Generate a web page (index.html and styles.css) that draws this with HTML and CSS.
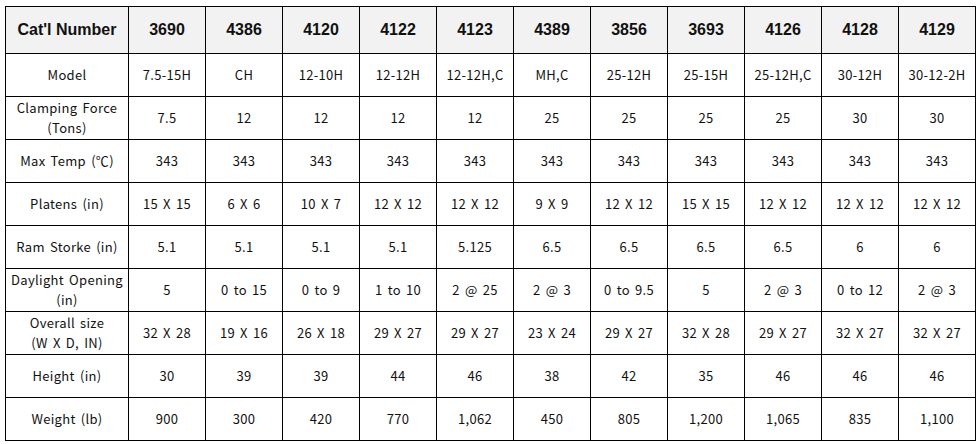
FILE: index.html
```html
<!DOCTYPE html>
<html>
<head>
<meta charset="utf-8">
<link rel="stylesheet" href="styles.css">
</head>
<body>
<table class="spec">
<colgroup>
<col class="c-label">
<col span="11" class="c-val">
</colgroup>
<thead>
<tr><th>Cat'l Number</th><th>3690</th><th>4386</th><th>4120</th><th>4122</th><th>4123</th><th>4389</th><th>3856</th><th>3693</th><th>4126</th><th>4128</th><th>4129</th></tr>
</thead>
<tbody>
<tr><td>Model</td><td>7.5-15H</td><td>CH</td><td>12-10H</td><td>12-12H</td><td>12-12H,C</td><td>MH,C</td><td>25-12H</td><td>25-15H</td><td>25-12H,C</td><td>30-12H</td><td>30-12-2H</td></tr>
<tr><td>Clamping Force<br>(Tons)</td><td>7.5</td><td>12</td><td>12</td><td>12</td><td>12</td><td>25</td><td>25</td><td>25</td><td>25</td><td>30</td><td>30</td></tr>
<tr><td>Max Temp (℃)</td><td>343</td><td>343</td><td>343</td><td>343</td><td>343</td><td>343</td><td>343</td><td>343</td><td>343</td><td>343</td><td>343</td></tr>
<tr><td>Platens (in)</td><td>15 X 15</td><td>6 X 6</td><td>10 X 7</td><td>12 X 12</td><td>12 X 12</td><td>9 X 9</td><td>12 X 12</td><td>15 X 15</td><td>12 X 12</td><td>12 X 12</td><td>12 X 12</td></tr>
<tr><td>Ram Storke (in)</td><td>5.1</td><td>5.1</td><td>5.1</td><td>5.1</td><td>5.125</td><td>6.5</td><td>6.5</td><td>6.5</td><td>6.5</td><td>6</td><td>6</td></tr>
<tr><td>Daylight Opening<br>(in)</td><td>5</td><td>0 to 15</td><td>0 to 9</td><td>1 to 10</td><td>2 @ 25</td><td>2 @ 3</td><td>0 to 9.5</td><td>5</td><td>2 @ 3</td><td>0 to 12</td><td>2 @ 3</td></tr>
<tr><td>Overall size<br>(W X D, IN)</td><td>32 X 28</td><td>19 X 16</td><td>26 X 18</td><td>29 X 27</td><td>29 X 27</td><td>23 X 24</td><td>29 X 27</td><td>32 X 28</td><td>29 X 27</td><td>32 X 27</td><td>32 X 27</td></tr>
<tr><td>Height (in)</td><td>30</td><td>39</td><td>39</td><td>44</td><td>46</td><td>38</td><td>42</td><td>35</td><td>46</td><td>46</td><td>46</td></tr>
<tr><td>Weight (lb)</td><td>900</td><td>300</td><td>420</td><td>770</td><td>1,062</td><td>450</td><td>805</td><td>1,200</td><td>1,065</td><td>835</td><td>1,100</td></tr>
</tbody>
</table>
</body>
</html>
```
FILE: styles.css
```css
html, body {
  margin: 0;
  background: #fff;
}
body {
  padding: 6px 5px 0 5px;
  font-family: "Noto Sans CJK KR", "Noto Sans", sans-serif;
  color: #111;
}
.spec {
  border-collapse: collapse;
  table-layout: fixed;
  width: 971px;
}
.c-label { width: 123px; }
.c-val { width: 77px; }
.spec th, .spec td {
  border: 1px solid #000;
  text-align: center;
  vertical-align: middle;
  padding: 0;
}
.spec th {
  height: 46px;
  background: #f2f2f2;
  font-family: "Liberation Sans", Arial, sans-serif;
  font-weight: bold;
  font-size: 16px;
  color: #111;
}
.spec td {
  height: 42px;
  font-size: 13px;
  line-height: 20px;
  word-spacing: 2px;
  letter-spacing: 0.3px;
  white-space: nowrap;
}
```
